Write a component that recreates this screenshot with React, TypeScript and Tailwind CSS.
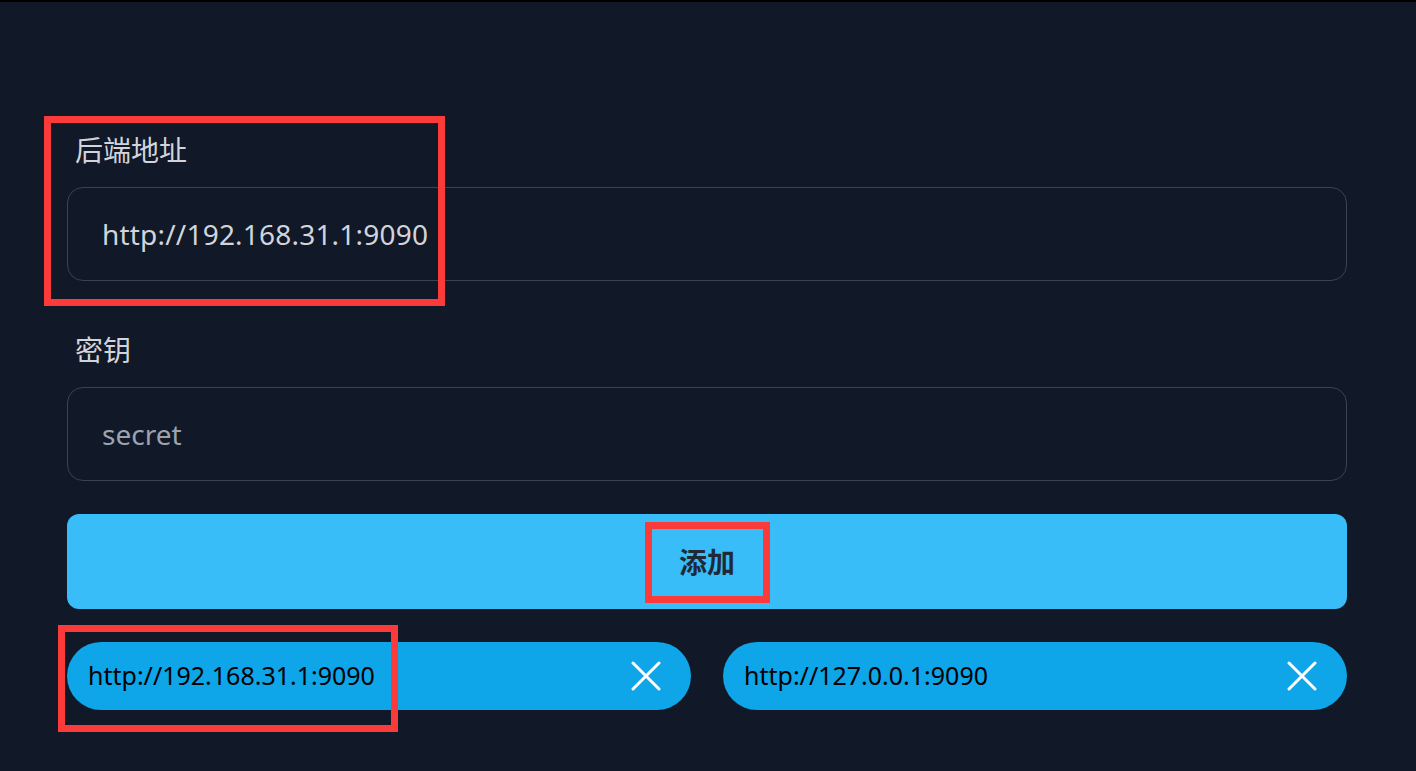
import React from "react";

function XIcon() {
  return (
    <svg width="30" height="30" viewBox="0 0 30 30" fill="none" stroke="white" strokeWidth="3" strokeLinecap="round">
      <path d="M2 2 L28 28" />
      <path d="M28 2 L2 28" />
    </svg>
  );
}

function Chip({ text }: { text: string }) {
  return (
    <div className="flex h-[68px] items-center justify-between rounded-full bg-[#0ea5e9] pl-[21px] pr-[30px]">
      <span className="text-[25px] text-black">{text}</span>
      <XIcon />
    </div>
  );
}

export default function App() {
  return (
    <div
      className="relative h-[771px] w-full overflow-hidden border-t-2 border-black bg-[#111827]"
      style={{ fontFamily: '"Noto Sans", "Noto Sans CJK SC", sans-serif' }}
    >
      <div className="flex flex-col pl-[67px] pr-[69px] pt-[128px]">
        <label className="pl-[8px] text-[28px] leading-[40px] text-[#d1d5db]">后端地址</label>
        <div className="mt-[17px] flex h-[94px] items-center rounded-[16px] border border-[#3b4252] px-[34px]">
          <span className="text-[28px] tracking-[0.2px] text-[#d1d5db]">http://192.168.31.1:9090</span>
        </div>
        <label className="mt-[49px] pl-[8px] text-[28px] leading-[40px] text-[#d1d5db]">密钥</label>
        <div className="mt-[17px] flex h-[94px] items-center rounded-[16px] border border-[#3b4252] px-[34px]">
          <span className="text-[28px] text-[#9ca3af]">secret</span>
        </div>
        <button className="mt-[33px] flex h-[95px] items-center justify-center rounded-[12px] bg-[#38bdf8] text-[28px] font-bold text-[#1f2937]">
          添加
        </button>
        <div className="mt-[33px] grid grid-cols-2 gap-[32px]">
          <Chip text="http://192.168.31.1:9090" />
          <Chip text="http://127.0.0.1:9090" />
        </div>
      </div>

      <div className="absolute left-[44px] top-[114px] h-[190px] w-[401px] border-[7px] border-[#fb3a3a]" />
      <div className="absolute left-[645px] top-[520px] h-[81px] w-[125px] border-[7px] border-[#fb3a3a]" />
      <div className="absolute left-[58px] top-[623px] h-[107px] w-[340px] border-[7px] border-[#fb3a3a]" />
    </div>
  );
}
